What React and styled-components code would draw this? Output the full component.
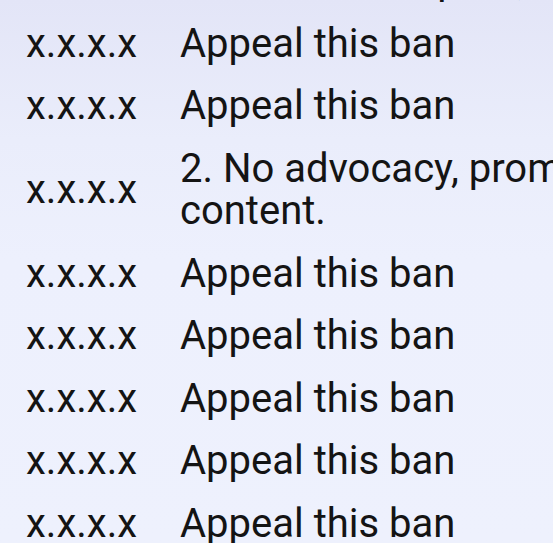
import React from "react";
import styled, { createGlobalStyle } from "styled-components";

const GlobalStyle = createGlobalStyle`
  html, body {
    margin: 0;
    padding: 0;
    overflow: hidden;
  }
  body {
    font-family: Roboto, "Noto Sans", sans-serif;
    background: #eef1fd;
  }
`;

const Viewport = styled.div`
  width: 100vw;
  height: 543px;
  overflow: hidden;
  background: linear-gradient(180deg, #e3e5f7 0px, #eaedfb 140px, #edf0fd 260px, #eef1fd 100%);
`;

const BanList = styled.div`
  display: flex;
  flex-direction: column;
  margin-top: -50px;
  padding-left: 26px;
`;

const BanRow = styled.div`
  display: grid;
  grid-template-columns: 110px 1040px;
  column-gap: 44px;
  align-items: center;
  padding: 10px 0;
  font-size: 40px;
  line-height: 42.5px;
  color: #141414;
`;

const Address = styled.div`
  white-space: nowrap;
`;

const Reason = styled.div`
  white-space: ${(p) => (p.$single ? "nowrap" : "normal")};
`;

const rows = [
  { ip: "x.x.x.x", reason: "No scams or spam, no phishing, no malware links.", single: true },
  { ip: "x.x.x.x", reason: "Appeal this ban" },
  { ip: "x.x.x.x", reason: "Appeal this ban" },
  { ip: "x.x.x.x", reason: "2. No advocacy, promotion or sale of illegal or harmful content." },
  { ip: "x.x.x.x", reason: "Appeal this ban" },
  { ip: "x.x.x.x", reason: "Appeal this ban" },
  { ip: "x.x.x.x", reason: "Appeal this ban" },
  { ip: "x.x.x.x", reason: "Appeal this ban" },
  { ip: "x.x.x.x", reason: "Appeal this ban" },
];

export default function App() {
  return (
    <>
      <GlobalStyle />
      <Viewport>
        <BanList>
          {rows.map((r, i) => (
            <BanRow key={i}>
              <Address>{r.ip}</Address>
              <Reason $single={r.single}>{r.reason}</Reason>
            </BanRow>
          ))}
        </BanList>
      </Viewport>
    </>
  );
}
